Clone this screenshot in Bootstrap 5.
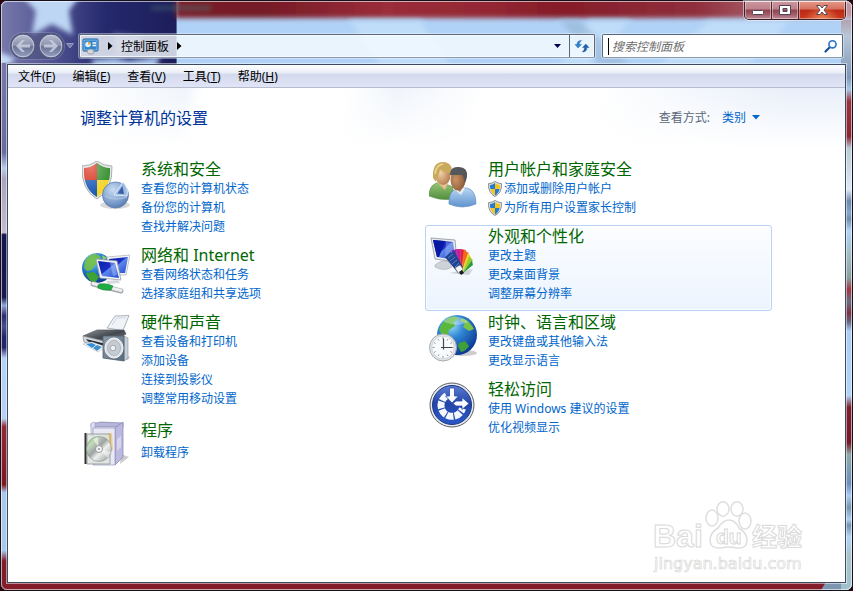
<!DOCTYPE html>
<html lang="zh-CN">
<head>
<meta charset="utf-8">
<meta name="viewport" content="width=device-width, initial-scale=1">
<title>控制面板</title>
<link href="https://cdn.jsdelivr.net/npm/bootstrap@5.3.0/dist/css/bootstrap.min.css" rel="stylesheet">
<style>
  body { font-family: "Noto Sans", "Noto Sans CJK SC", sans-serif; font-size: 12px; line-height: 19px; color: #000; background: #2a0509; }
  button, input, select { font: inherit; }
  .glass-window { isolation: isolate; padding: 0 6px 7px; border: 1px solid #15101c; border-radius: 7px; box-shadow: inset 0 0 0 1px rgba(255,255,255,.6); background: #b0d0f4; }
  .glass-backdrop { z-index: -1; border-radius: 6px; }
  .glass-rim { border: 1px solid rgba(255,255,255,.6); border-radius: 6px; }
  .caption-row { height: 33px; }
  .caption-group { height: 19px; border: 1px solid #39202a; border-top: 0; border-radius: 0 0 5px 5px; box-shadow: 0 0 0 1px rgba(255,255,255,.5); overflow: hidden; }
  .caption-btn { width: 27px; padding: 0; border: 0; border-right: 1px solid #4c2530; box-shadow: inset 0 0 0 1px rgba(255,255,255,.4); background: linear-gradient(#cd98a0 0, #bd8089 45%, #8e414e 50%, #a35d69 75%, #bf8e9a 100%); }
  .caption-close { width: 46px; border-right: 0; background: radial-gradient(ellipse at 50% 110%, #f08b58 0, rgba(230,90,50,0) 55%), linear-gradient(#e79a8a 0, #d5705e 45%, #bb2814 50%, #c93a20 100%); }
  .nav-row { padding: 0 3px; height: 24px; margin-bottom: 6px; }
  .travel { width: 69px; gap: 2px; }
  .travel-btn { width: 26px; height: 26px; }
  .travel-trough { gap: 2px; border-radius: 13px; background: rgba(70,76,115,.45); box-shadow: 0 0 0 1px rgba(160,168,200,.35); }
  .travel svg { display: block; }
  .address-bar { height: 24px; border: 1px solid #58677c; border-bottom-color: #8799ad; border-radius: 2px; background: rgba(248,252,255,.8); box-shadow: 0 0 0 1px rgba(255,255,255,.4), inset 0 0 0 1px rgba(255,255,255,.7); }
  .address-bar a { color: #000; }
  .crumbs { gap: 8px; padding-left: 2px; }
  .refresh-btn { width: 25px; border-left: 1px solid #58677c !important; }
  .search-box { width: 241px; height: 24px; border: 1px solid #58677c; border-bottom-color: #8799ad; border-radius: 2px; background: #fff; margin-left: 7px; padding: 0 4px 0 5px; box-shadow: 0 0 0 1px rgba(255,255,255,.4); }
  .search-box input { font-style: italic; outline: 0; padding: 0 0 0 3px; }
  .search-box input::placeholder { color: #6d6d6d; opacity: 1; }
  .text-caret { width: 1px; height: 17px; background: #000; }
  .client-area { border: 1px solid #3c4b62; background: #fff; box-shadow: 0 0 0 1px rgba(255,255,255,.5); }
  .menu-strip { height: 23px; gap: 1px; padding-left: 2px; border-bottom: 1px solid #b6bccc; background: linear-gradient(#fff 0, #e9edf6 8px, #d4daed 9px, #dfe5f6 100%); }
  .menu-strip button { padding: 1px 8px 0; line-height: 21px; color: #000; }
  .panel-body { background: linear-gradient(100deg, rgba(255,255,255,0) 9%, rgba(232,239,248,.7) 21%, rgba(255,255,255,0) 23%, rgba(255,255,255,0) 40%, rgba(228,236,247,.6) 46%, rgba(255,255,255,0) 56%, rgba(255,255,255,0) 70%, rgba(224,233,247,.8) 92%) top / 100% 66px no-repeat; }
  .panel-fade { background: linear-gradient(rgba(250,252,255,.1), #fff 60px); padding-bottom: 10px; }
  .panel-head { padding: 20px 85px 0 72px; height: 70px; }
  .panel-head h1 { font-size: 16px; line-height: 20px; color: #039; font-weight: 400; }
  .view-by { color: #5a6779; gap: 12px; }
  .view-by select { width: 38px; padding: 0; border: 0; color: #06c; appearance: none; background: transparent; }
  .view-by svg { margin-left: -20px; pointer-events: none; }
  .category-grid { padding: 0 73px 0 70px; }
  .category { padding: 0 3px 7px; border: 1px solid transparent; border-radius: 3px; }
  .category svg.cat-icon { width: 48px; height: 48px; flex: none; margin: 2px 11px 0 0; }
  .category h2 { font-size: 16px; line-height: 20px; font-weight: 400; margin: 0; }
  .category h2 a { color: #060; }
  .category ul a { color: #06c; }
  .category-short h2 { line-height: 26px; }
  .category.is-hot { border-color: #b9d3f5; background: linear-gradient(#fcfdff, #ecf4fe); box-shadow: inset 0 0 0 1px rgba(255,255,255,.7); }
  .category ul svg { width: 14px; height: 16px; flex: none; margin-right: 2px; }
  .watermark { right: 39px; bottom: 7px; pointer-events: none; }
</style>
<script src="https://cdn.jsdelivr.net/npm/bootstrap@5.3.0/dist/js/bootstrap.bundle.min.js"></script>
</head>
<body>
<div class="glass-window position-relative min-vh-100 d-flex flex-column">
  <svg class="glass-backdrop position-absolute top-0 start-0 w-100 h-100" viewBox="0 0 853 591" preserveAspectRatio="none" aria-hidden="true">
    <defs>
      <linearGradient id="navy"><stop offset="0" stop-color="#7779aa"/><stop offset=".3" stop-color="#4f5291"/><stop offset=".6" stop-color="#24296d"/><stop offset="1" stop-color="#1d1d5a"/></linearGradient>
      <linearGradient id="stripe"><stop offset="0" stop-color="#7b1e29"/><stop offset=".12" stop-color="#741a25"/><stop offset=".3" stop-color="#9a2d3a"/><stop offset=".45" stop-color="#932733"/><stop offset=".55" stop-color="#851c28"/><stop offset=".75" stop-color="#90303d"/><stop offset=".9" stop-color="#b97b88"/><stop offset="1" stop-color="#c9a0aa"/></linearGradient>
      <linearGradient id="leftEdge" x1="0" y1="0" x2="0" y2="1"><stop offset="0" stop-color="#7779aa"/><stop offset=".17" stop-color="#6b6c9d"/><stop offset=".2" stop-color="#b8cdea"/><stop offset=".22" stop-color="#a9a4bd"/><stop offset=".322" stop-color="#c5bccb"/><stop offset=".326" stop-color="#15164e"/><stop offset=".445" stop-color="#181850"/><stop offset=".46" stop-color="#8fa9d8"/><stop offset=".48" stop-color="#2c2c6d"/><stop offset=".5" stop-color="#4a4d8c"/><stop offset=".52" stop-color="#24246a"/><stop offset=".54" stop-color="#24246a"/><stop offset=".56" stop-color="#b5d3f5"/><stop offset=".675" stop-color="#b5d0f2"/><stop offset=".69" stop-color="#8f2b36"/><stop offset=".8" stop-color="#7c1822"/><stop offset=".815" stop-color="#a9c7eb"/><stop offset=".925" stop-color="#a9c7eb"/><stop offset=".945" stop-color="#7e1c28"/></linearGradient>
      <linearGradient id="rightEdge" gradientUnits="userSpaceOnUse" x1="0" y1="0" x2="0" y2="591"><stop offset="0" stop-color="#b0797f"/><stop offset=".06" stop-color="#b7c6d8"/><stop offset=".13" stop-color="#7f98b8"/><stop offset=".15" stop-color="#a7c8e8"/><stop offset=".17" stop-color="#98323f"/><stop offset=".23" stop-color="#8b2533"/><stop offset=".25" stop-color="#b8cbd3"/><stop offset=".32" stop-color="#dce8f7"/><stop offset=".34" stop-color="#6c89ac"/><stop offset=".36" stop-color="#85a6cc"/><stop offset=".37" stop-color="#6f8dac"/><stop offset=".39" stop-color="#b1d4f8"/><stop offset=".43" stop-color="#a2bdc4"/><stop offset=".47" stop-color="#8aa0a0"/><stop offset=".49" stop-color="#a03643"/><stop offset=".51" stop-color="#6b6a82"/><stop offset=".53" stop-color="#7b3145"/><stop offset=".545" stop-color="#646680"/><stop offset=".56" stop-color="#abcef5"/><stop offset=".67" stop-color="#b0d3f7"/><stop offset=".69" stop-color="#7b1f2b"/><stop offset=".75" stop-color="#701a26"/><stop offset=".77" stop-color="#8fa9a8"/><stop offset=".82" stop-color="#6c8fbc"/><stop offset=".84" stop-color="#a9cdf5"/><stop offset=".86" stop-color="#7795ac"/><stop offset=".88" stop-color="#acd0f7"/><stop offset=".89" stop-color="#7492ab"/><stop offset=".91" stop-color="#b3d6f8"/><stop offset=".94" stop-color="#a9c4cc"/><stop offset="1" stop-color="#9fc0cc"/></linearGradient>
      <filter id="soft" x="-20%" y="-20%" width="140%" height="140%"><feGaussianBlur stdDeviation="2.5"/></filter>
      <clipPath id="topClip"><rect width="853" height="72"/></clipPath>
    </defs>
    <rect width="853" height="591" fill="#b0d2f6"/>
    <g clip-path="url(#topClip)">
      <rect width="176" height="80" fill="url(#navy)"/>
      <g filter="url(#soft)">
        <rect x="175" y="-10" width="700" height="27" fill="url(#stripe)"/>
        <path d="M22-4l12-10h32l12 10-10 14 4 24-21-11-20 11 4-24Z" fill="#bdd6f4"/>
        <path d="M-5 50l20 8-10 8 3 14h-20Z" fill="#c4dcf6"/>
        <path d="M90 59l24-2 14 3 22-3 10-1-6 12 8 12H100Z" fill="#a9c5eb"/>
        <path d="M112 31l30 4-6 14-20 5Z" fill="#8488b5" opacity=".5"/>
        <path d="M150 7h60" stroke="#44656d" stroke-opacity=".6" stroke-width="4"/>
        <path d="M350 20l30 44h70l-30-44ZM590 20l-30 44h30l40-44ZM710 20l-50 44h90l40-44Z" fill="#c9e3fb" opacity=".6"/>
        <path d="M560 20l40 44h30l-50-44Z" fill="#8faecd" opacity=".5"/>
      </g>
    </g>
    <rect y="62" width="12" height="529" fill="url(#leftEdge)"/>
    <rect x="842" y="19" width="12" height="572" fill="url(#rightEdge)"/>
    <rect y="581" width="828" height="10" fill="#831d29"/>
    <path d="M828 581h14v10h-20Z" fill="#7c96b2"/>
  </svg>
  <div class="glass-rim position-absolute top-0 start-0 w-100 h-100 pe-none"></div>

  <div class="caption-row d-flex justify-content-end align-items-start flex-shrink-0">
    <div class="caption-group d-flex">
      <button class="caption-btn" aria-label="最小化"><svg width="14" height="16" viewBox="0 0 14 16" class="d-block mx-auto"><rect x="1.500" y="8.500" width="11" height="4" rx="1" fill="#fff" stroke="#4c4553"/></svg></button>
      <button class="caption-btn" aria-label="最大化"><svg width="14" height="16" viewBox="0 0 14 16" class="d-block mx-auto"><path fill="#fff" stroke="#4c4553" fill-rule="evenodd" d="M1.500 3.500h11v9h-11ZM5 6.500v3h4v-3Z"/></svg></button>
      <button class="caption-btn caption-close" aria-label="关闭"><svg width="14" height="16" viewBox="0 0 14 16" class="d-block mx-auto"><path d="M1.500 3.500H5L7 6l2-2.500h3.500L9 8l3.500 4.500H9L7 10l-2 2.500H1.500L5 8Z" fill="#fff" stroke="#5a4650"/></svg></button>
    </div>
  </div>

  <div class="nav-row d-flex align-items-center flex-shrink-0">
    <div class="travel d-flex align-items-center flex-shrink-0">
      <svg width="0" height="0" class="position-absolute" aria-hidden="true"><defs><linearGradient id="orb" x1="0" y1="0" x2="0" y2="1"><stop offset="0" stop-color="#b9bfd2"/><stop offset=".48" stop-color="#8b92ad"/><stop offset=".52" stop-color="#6b7295"/><stop offset="1" stop-color="#97a3c2"/></linearGradient></defs></svg>
      <div class="travel-trough d-flex">
        <button class="travel-btn btn p-0 border-0" aria-label="后退"><svg width="26" height="26" viewBox="0 0 26 26"><circle cx="13" cy="13" r="12" fill="url(#orb)" stroke="#535a7b" stroke-width="1.500"/><circle cx="13" cy="13" r="10.800" fill="none" stroke="#d2d8e6" stroke-opacity=".75"/><path d="M6 13l6-6h3l-4 4.500h9v3h-9l4 4.500h-3Z" fill="#c9d0e0" opacity=".85"/></svg></button>
        <button class="travel-btn btn p-0 border-0" aria-label="前进"><svg width="26" height="26" viewBox="0 0 26 26"><circle cx="13" cy="13" r="12" fill="url(#orb)" stroke="#535a7b" stroke-width="1.500"/><circle cx="13" cy="13" r="10.800" fill="none" stroke="#d2d8e6" stroke-opacity=".75"/><path d="M20 13l-6-6h-3l4 4.500H6v3h9L11 19h3Z" fill="#c9d0e0" opacity=".85"/></svg></button>
      </div>
      <button class="btn p-0 border-0" aria-label="最近的页面"><svg width="8" height="6" viewBox="0 0 8 6"><path d="M.5.500h7L4 5Z" fill="#767fa8" stroke="#a7b0cf" stroke-width=".7"/></svg></button>
    </div>
    <div class="address-bar d-flex flex-grow-1 align-items-stretch">
      <div class="crumbs d-flex align-items-center flex-grow-1">
        <svg width="18" height="18" viewBox="0 0 18 18" aria-hidden="true"><rect x="1" y="2" width="15" height="12" rx="1" fill="#3186cd" stroke="#175790"/><rect x="2" y="3" width="13" height="10" fill="none" stroke="#8bcbf4" stroke-width=".8"/><circle cx="6" cy="7.500" r="2.800" fill="#d6f1ff"/><path d="M6 7.500V4.700a2.800 2.800 0 0 1 2.800 2.800Z" fill="#f4a42c"/><path d="M10.500 6h3.500M10.500 8.500h3.500" stroke="#fff" stroke-width="1.300"/><path d="M5 15q0-3 3.500-3 3.500 0 3.500 3l-1 2H7Z" fill="#d5d6d9" stroke="#8d8d93" stroke-width=".7"/></svg>
        <svg width="5" height="8" viewBox="0 0 5 8" aria-hidden="true"><path d="M0 0l4.500 4L0 8Z" fill="#000"/></svg>
        <a href="#" class="text-decoration-none">控制面板</a>
        <svg width="5" height="8" viewBox="0 0 5 8" aria-hidden="true"><path d="M0 0l4.500 4L0 8Z" fill="#000"/></svg>
      </div>
      <button class="btn p-0 border-0 px-2 d-flex align-items-center" aria-label="以前的位置"><svg width="7" height="4" viewBox="0 0 7 4"><path d="M0 0h7L3.500 4Z" fill="#00004c"/></svg></button>
      <button class="refresh-btn btn p-0 border-0 rounded-0 d-flex align-items-center justify-content-center" aria-label="刷新"><svg width="16" height="16" viewBox="0 0 16 16"><path d="M1 6.500L4 10l3.500-3.500H5.300Q5.300 4 7.500 2.500 3 2.600 2.900 6.500Z" fill="#2d84cf" stroke="#1e62a8" stroke-width=".4"/><path d="M15 9.500L11.800 6 8.500 9.500h2Q10.600 12.500 8.300 14q4.600 0 4.600-4.500Z" fill="#1f62b1" stroke="#174c8e" stroke-width=".4"/></svg></button>
    </div>
    <div class="search-box d-flex align-items-center flex-shrink-0">
      <span class="text-caret" aria-hidden="true"></span>
      <input type="text" class="flex-grow-1 border-0 bg-transparent w-100" placeholder="搜索控制面板" aria-label="搜索控制面板">
      <button class="btn p-0 border-0 d-flex" aria-label="搜索"><svg width="14" height="14" viewBox="0 0 14 14"><path d="M1.500 12.500l4.200-4.300" stroke="#1b4c9c" stroke-width="2.200" stroke-linecap="round"/><circle cx="8.500" cy="5.300" r="3.600" fill="#f4faff" stroke="#2b72c2" stroke-width="1.600"/></svg></button>
    </div>
  </div>

  <div class="client-area position-relative flex-grow-1 d-flex flex-column">
    <nav class="menu-strip d-flex flex-shrink-0" aria-label="菜单栏">
      <button class="border-0 bg-transparent">文件(<u>F</u>)</button>
      <button class="border-0 bg-transparent">编辑(<u>E</u>)</button>
      <button class="border-0 bg-transparent">查看(<u>V</u>)</button>
      <button class="border-0 bg-transparent">工具(<u>T</u>)</button>
      <button class="border-0 bg-transparent">帮助(<u>H</u>)</button>
    </nav>

    <main class="panel-body flex-grow-1">
      <div class="panel-fade h-100">
        <header class="panel-head d-flex justify-content-between align-items-start">
          <h1 class="m-0">调整计算机的设置</h1>
          <div class="view-by d-flex align-items-center">
            <label for="view">查看方式:</label>
            <select id="view"><option>类别</option><option>大图标</option><option>小图标</option></select>
            <svg width="8" height="5" viewBox="0 0 8 5" aria-hidden="true"><path d="M0 0h8L4 4.500Z" fill="#06c"/></svg>
          </div>
        </header>

        <div class="category-grid row g-0">
          <div class="col-6">
            <section class="category d-flex">
              <svg class="cat-icon" viewBox="0 0 48 48" aria-hidden="true">
                <defs><clipPath id="shieldBig"><path d="M15 2q6 5 13 5 1 21-13 29Q1 28 2 7q7 0 13-5Z"/></clipPath><radialGradient id="pie" cx=".4" cy=".3" r=".8"><stop offset="0" stop-color="#c8dcf2"/><stop offset=".6" stop-color="#7fa1cd"/><stop offset="1" stop-color="#4c70a8"/></radialGradient><radialGradient id="shine" cx=".3" cy=".15" r=".7"><stop offset="0" stop-color="#fff" stop-opacity=".35"/><stop offset="1" stop-color="#fff" stop-opacity="0"/></radialGradient></defs>
                <ellipse cx="33" cy="44" rx="15" ry="4" fill="#000" opacity=".15"/>
                <path d="M15 0q7 5 15 5 1 24-15 33Q-1 29 0 5q8 0 15-5Z" fill="#e4e6e8" stroke="#999da2" stroke-width=".8"/>
                <g clip-path="url(#shieldBig)"><path d="M0 0h15v19H0Z" fill="#d8301c"/><path d="M15 0h15v19H15Z" fill="#379030"/><path d="M0 19h15v20H0Z" fill="#1f5cb5"/><path d="M15 19h15v20H15Z" fill="#f6d52b"/><path d="M0 0h30v38H0Z" fill="url(#shine)"/></g>
                <circle cx="33.500" cy="34" r="13" fill="url(#pie)" stroke="#5b7cad" stroke-width=".8"/>
                <path d="M23 35q10 5 22 1" stroke="#b8cee8" stroke-width="2" fill="none" opacity=".5"/>
                <path d="M41 21l-9 13 13 1q2-8-4-14Z" fill="#9dbde3" stroke="#f2f7ff" stroke-width=".8"/><path d="M40.500 25l-5 7.500 6.500.5Z" fill="#3c5fa3"/>
              </svg>
              <div><h2><a href="#" class="text-decoration-none">系统和安全</a></h2>
                <ul class="list-unstyled m-0"><li><a href="#" class="text-decoration-none">查看您的计算机状态</a></li><li><a href="#" class="text-decoration-none">备份您的计算机</a></li><li><a href="#" class="text-decoration-none">查找并解决问题</a></li></ul></div>
            </section>

            <section class="category d-flex">
              <svg class="cat-icon" viewBox="0 0 48 48" aria-hidden="true">
                <defs><radialGradient id="globe" cx=".35" cy=".25" r=".8"><stop offset="0" stop-color="#9fe0fa"/><stop offset=".4" stop-color="#2f86d4"/><stop offset="1" stop-color="#0a3590"/></radialGradient><linearGradient id="screen" x1="0" y1="0" x2="1" y2="1"><stop offset="0" stop-color="#0a1ea6"/><stop offset=".45" stop-color="#1a2fc4"/><stop offset=".5" stop-color="#5f86ea"/><stop offset="1" stop-color="#244bd0"/></linearGradient></defs>
                <circle cx="15" cy="21" r="15" fill="url(#globe)"/>
                <path d="M3 14Q7 7 14 7l5 3-3 3 2 3-5 2-3 5-5 1-3-3Z" fill="#72c043" opacity=".9"/><path d="M4 26l8-1 5 5-4 6Q6 34 4 26Z" fill="#3ea335"/><path d="M20 8l5 3-4 2Z" fill="#91d35a"/>
                <path d="M25 10l23-2-4 20-18 0Z" fill="#f1f3f6" stroke="#aab0b8" stroke-width=".7"/><path d="M27 12l19-2-3 16H28Z" fill="url(#screen)"/>
                <path d="M14 12l21 2 4 19-21-2Z" fill="#f1f3f6" stroke="#999fa8" stroke-width=".8"/><path d="M16 14l17 2 4 15-17-2Z" fill="url(#screen)"/><path d="M28 16l5 0 2 12-4 1Z" fill="#a6c1fa" opacity=".5"/>
                <path d="M24 34l12-1 2 3-12 1Z" fill="#d6dade"/>
                <path d="M11 37l15 4M27 41l12 3" stroke="#a5a9ac" stroke-width="5" stroke-linecap="round"/><path d="M11 36.500l15 4M27 40.500l12 3" stroke="#eceeef" stroke-width="3" stroke-linecap="round"/>
                <path d="M16 38q6-3 15 1l-2 4q-8 1-13-2Z" fill="#20ad45" stroke="#138030" stroke-width=".6"/>
              </svg>
              <div><h2><a href="#" class="text-decoration-none">网络和 Internet</a></h2>
                <ul class="list-unstyled m-0"><li><a href="#" class="text-decoration-none">查看网络状态和任务</a></li><li><a href="#" class="text-decoration-none">选择家庭组和共享选项</a></li></ul></div>
            </section>

            <section class="category d-flex">
              <svg class="cat-icon" viewBox="0 0 48 48" aria-hidden="true">
                <defs><linearGradient id="prn" x1="0" y1="0" x2="1" y2="1"><stop offset="0" stop-color="#8e949b"/><stop offset=".5" stop-color="#44484d"/><stop offset="1" stop-color="#80868d"/></linearGradient><linearGradient id="spk" x1="0" y1="0" x2="1" y2="1"><stop offset="0" stop-color="#8b9aa9"/><stop offset="1" stop-color="#5b6b7c"/></linearGradient></defs>
                <path d="M25 14L33 2l14-.5-6 15Z" fill="#f0f4f8" stroke="#9aa1a9" stroke-width=".8"/><path d="M30 11l5-7 9-.3" stroke="#cbd7e3" fill="none"/>
                <path d="M1 22l14-6h27l2 4-14 9Z" fill="url(#prn)" stroke="#555a61" stroke-width=".7"/><path d="M1 22l29 7v7L2 28Z" fill="#d5dadf" stroke="#7f868d" stroke-width=".7"/>
                <path d="M4 25l18 4.500-1 2-15-4Z" fill="#26292d"/><path d="M1 30l9-2 14 5-8 5Z" fill="#fafcfd" stroke="#a6adb3" stroke-width=".5"/><path d="M4 30l6-1 4 2-4 3Z" fill="#2f8fd8"/><path d="M11 34l4-3 5 2-5 4Z" fill="#3f8fc6"/>
                <path d="M38 46h8l2-3-4-2Z" fill="#000" opacity=".2"/><path d="M42 22l4 2v20l-4 3Z" fill="#c8d0d7" stroke="#87919b" stroke-width=".6"/>
                <path d="M21 22h21v25l-21-3Z" fill="url(#spk)" stroke="#506071" stroke-width=".8"/><ellipse cx="32" cy="34" rx="9" ry="10" fill="#dce1e6" stroke="#f7f8f9"/><ellipse cx="32" cy="34" rx="6.500" ry="7.500" fill="#c6ccd3" stroke="#a0a9b2" stroke-width=".7"/><circle cx="31" cy="34" r="2.800" fill="#eef0f3" stroke="#848f99" stroke-width=".7"/>
              </svg>
              <div><h2><a href="#" class="text-decoration-none">硬件和声音</a></h2>
                <ul class="list-unstyled m-0"><li><a href="#" class="text-decoration-none">查看设备和打印机</a></li><li><a href="#" class="text-decoration-none">添加设备</a></li><li><a href="#" class="text-decoration-none">连接到投影仪</a></li><li><a href="#" class="text-decoration-none">调整常用移动设置</a></li></ul></div>
            </section>

            <section class="category category-short d-flex">
              <svg class="cat-icon" viewBox="0 0 48 48" aria-hidden="true">
                <defs><linearGradient id="disc" x1="0" y1="0" x2="1" y2="1"><stop offset="0" stop-color="#6fdc3a"/><stop offset=".25" stop-color="#c6d6be"/><stop offset=".45" stop-color="#9ca3a1"/><stop offset=".6" stop-color="#eff0ee"/><stop offset="1" stop-color="#85908f"/></linearGradient></defs>
                <path d="M38 45l9-7-8-3Z" fill="#000" opacity=".2"/>
                <path d="M9 5l10-2 22 1v4H9Z" fill="#b5b5da" stroke="#8585b0" stroke-width=".7"/>
                <path d="M9 4l4-1v14H9Z" fill="#dedef0" stroke="#9e9ec6" stroke-width=".6"/><path d="M33 9l8-6v35l-8 8Z" fill="#bbb9df" stroke="#7f7eae" stroke-width=".7"/><path d="M35 20l4-3v11l-4 4Z" fill="#e8e7f5" opacity=".6"/>
                <path d="M11 9h22v37H11Z" fill="#e9e9f6" stroke="#9695bd" stroke-width=".7"/><path d="M22 15l8-1 1 17-8 2Z" fill="#f2ce83"/>
                <path d="M5 15h23v30H5Z" fill="#dde2df" fill-opacity=".8" stroke="#7f8685" stroke-width=".7"/><path d="M3.500 14v31" stroke="#303030" stroke-width="2"/>
                <circle cx="17" cy="30" r="12.500" fill="url(#disc)" stroke="#858d89" stroke-width=".6"/><path d="M17 30L11 20l5-2ZM17 30l12 3-3 6Z" fill="#fff" opacity=".5"/><circle cx="17" cy="30" r="3.500" fill="#f8f8f8" stroke="#929a98"/><circle cx="17" cy="30" r="1.300" fill="#a7afac"/>
              </svg>
              <div><h2><a href="#" class="text-decoration-none">程序</a></h2>
                <ul class="list-unstyled m-0"><li><a href="#" class="text-decoration-none">卸载程序</a></li></ul></div>
            </section>
          </div>

          <div class="col-6">
            <section class="category d-flex">
              <svg class="cat-icon" viewBox="0 0 48 48" aria-hidden="true">
                <defs><radialGradient id="skinA" cx=".35" cy=".4" r=".7"><stop offset="0" stop-color="#f0cfa6"/><stop offset="1" stop-color="#b07a4b"/></radialGradient><radialGradient id="skinB" cx=".35" cy=".5" r=".7"><stop offset="0" stop-color="#c99365"/><stop offset="1" stop-color="#855433"/></radialGradient><linearGradient id="coatA" x1="0" y1="0" x2="0" y2="1"><stop offset="0" stop-color="#9cc878"/><stop offset="1" stop-color="#4f8e3e"/></linearGradient><linearGradient id="coatB" x1="0" y1="0" x2="0" y2="1"><stop offset="0" stop-color="#b7d6f4"/><stop offset="1" stop-color="#5f93ce"/></linearGradient></defs>
                <path d="M0 35q0-13 12-14l12 5v12q-12 2-24-3Z" fill="url(#coatA)" stroke="#5b8d4c" stroke-width=".6"/>
                <path d="M8 21l8 8 4-9Z" fill="#e8c092"/><ellipse cx="14" cy="14" rx="7.500" ry="10" fill="url(#skinA)"/>
                <path d="M4 17Q3 1 14 1q8 0 9 8l-2 3Q15 12 11 8q-1 4-4 13Z" fill="#c9aa5c"/><path d="M6 13Q7 4 14 3" stroke="#ead895" fill="none" stroke-width="1.500"/>
                <path d="M20 43q-1-14 10-16h8q9 2 9 16-14 6-27 0Z" fill="url(#coatB)" stroke="#5d87b7" stroke-width=".6"/><path d="M24 27l8 7 4-7Z" fill="#e6eff8"/><path d="M25 26l6 5 4-7Z" fill="#b47e50"/>
                <ellipse cx="29" cy="18.500" rx="7.500" ry="11" fill="url(#skinB)"/><path d="M21 14Q21 5 30 6q9 0 8 10-1 4-2 6-1-6-3-8-6 0-12 0Z" fill="#55585b"/>
              </svg>
              <div><h2><a href="#" class="text-decoration-none">用户帐户和家庭安全</a></h2>
                <ul class="list-unstyled m-0">
                  <li class="d-flex align-items-center"><svg viewBox="0 0 14 16" aria-hidden="true"><defs><clipPath id="shieldSmall"><path d="M7 2q2.500 2 5 2 .5 7-5 10.500Q1.500 11 2 4q2.500 0 5-2Z"/></clipPath></defs><path id="uac" d="M7 .5q3 2 6.500 2.200Q14 12 7 15.500 0 12 .5 2.700 4 2.500 7 .5Z" fill="#dfe3e6" stroke="#7d858c" stroke-width=".9"/><g clip-path="url(#shieldSmall)"><path d="M0 0h7v8H0ZM7 8h7v8H7Z" fill="#247bd2"/><path d="M7 0h7v8H7ZM0 8h7v8H0Z" fill="#f6c51d"/></g></svg><a href="#" class="text-decoration-none">添加或删除用户帐户</a></li>
                  <li class="d-flex align-items-center"><svg viewBox="0 0 14 16" aria-hidden="true"><use href="#uac"/><g clip-path="url(#shieldSmall)"><path d="M0 0h7v8H0ZM7 8h7v8H7Z" fill="#247bd2"/><path d="M7 0h7v8H7ZM0 8h7v8H0Z" fill="#f6c51d"/></g></svg><a href="#" class="text-decoration-none">为所有用户设置家长控制</a></li>
                </ul></div>
            </section>

            <section class="category is-hot d-flex">
              <svg class="cat-icon" viewBox="0 0 48 48" aria-hidden="true">
                <path d="M6 37q7-6 14-3l3 5q-8 5-17 0Z" fill="#cfd3d7" stroke="#a7adb2" stroke-width=".6"/>
                <path d="M2 10l24 2 2 22-22-3Z" fill="#e8eaed" stroke="#8d949c" stroke-width=".8"/><path d="M4 12l20 2 2 18-18-3Z" fill="url(#screen)"/><path d="M4 12l12 1-6 16H8Z" fill="#0818a3"/><path d="M17 14l7 1 1 9-9 6Z" fill="#9ab4f3" opacity=".45"/>
                <path d="M20 45l20 2 4-6Z" fill="#000" opacity=".15"/>
                <g stroke="#fff" stroke-opacity=".35" stroke-width=".4"><path d="M31 46L16 29l6-6Z" fill="#2450b8"/><path d="M31 46l-9-24 7-1Z" fill="#8126a8"/><path d="M31 46l-4-25 6 0Z" fill="#c41f98"/><path d="M31 46l1-25 5 1Z" fill="#e51d2c"/><path d="M32 46l3-24 5 3Z" fill="#f1681d"/><path d="M32 46l7-21 3 4Z" fill="#f6d01c"/><path d="M33 46l7-18 4 4Z" fill="#9bcd27"/><path d="M33 46l10-14 1 5Z" fill="#259b39"/></g>
                <path d="M16 29l9-6 9 16-5 6Z" fill="#24438f"/><path d="M19 30l5-4M21 33l5-4M23 36l5-4M26 39l4-4" stroke="#4f7fd0"/><path d="M26 40l5-3 3 4-4 5Z" fill="#f5f6f8" stroke="#777" stroke-width=".6"/><path d="M30 44l3-2 2 3-3 2Z" fill="#181a1e"/>
              </svg>
              <div><h2><a href="#" class="text-decoration-none">外观和个性化</a></h2>
                <ul class="list-unstyled m-0"><li><a href="#" class="text-decoration-none">更改主题</a></li><li><a href="#" class="text-decoration-none">更改桌面背景</a></li><li><a href="#" class="text-decoration-none">调整屏幕分辨率</a></li></ul></div>
            </section>

            <section class="category d-flex">
              <svg class="cat-icon" viewBox="0 0 48 48" aria-hidden="true">
                <ellipse cx="34" cy="39" rx="14" ry="3" fill="#000" opacity=".2"/><circle cx="28" cy="21" r="20" fill="url(#globe)"/>
                <path d="M10 15Q15 4 25 2l5 3-5 3 1 4-6 4-1 5-6 1Z" fill="#5bb83f"/><path d="M33 4q8 3 12 11l-5 2-6-4 2-4-5-2Z" fill="#79c246"/><path d="M30 29l6-2 4 5q-3 5-8 6l-3-6Z" fill="#3f9f38"/><path d="M14 7q12-9 26 1-13 6-26-1Z" fill="#fff" opacity=".3"/>
                <circle cx="14" cy="33.500" r="13.500" fill="#e1e5e9" stroke="#a5abb1"/><circle cx="14" cy="33.500" r="11.300" fill="#f9fafb" stroke="#c9ced3" stroke-width=".8"/>
                <path d="M14 23v2M14 42v2M3.500 33.500h2M22.500 33.500h2M19 25l-1 1.500M23 28.500l-1.500 1M23 38.500l-1.500-1M19 42l-1-1.500M9 42l1-1.500M5 38.500l1.500-1M5 28.500l1.500 1M9 25l1 1.500" stroke="#8b9299"/><path d="M14.500 24.500v11M12 33.500h11" stroke="#40474d" stroke-width="1.200"/>
              </svg>
              <div><h2><a href="#" class="text-decoration-none">时钟、语言和区域</a></h2>
                <ul class="list-unstyled m-0"><li><a href="#" class="text-decoration-none">更改键盘或其他输入法</a></li><li><a href="#" class="text-decoration-none">更改显示语言</a></li></ul></div>
            </section>

            <section class="category d-flex">
              <svg class="cat-icon" viewBox="0 0 48 48" aria-hidden="true">
                <defs><linearGradient id="ease" x1="0" y1="0" x2="0" y2="1"><stop offset="0" stop-color="#5d7fd2"/><stop offset=".45" stop-color="#2445a8"/><stop offset="1" stop-color="#2a58c8"/></linearGradient></defs>
                <circle cx="23" cy="24" r="22" fill="#e7eaee" stroke="#596066"/><circle cx="23" cy="24" r="19.500" fill="url(#ease)" stroke="#1b3684"/>
                <path d="M17.500 14.800A11 11 0 1 0 33.500 27.500" fill="none" stroke="#f4f7fc" stroke-width="7" stroke-dasharray="6.600 1.200"/>
                <path d="M20.500 7h5v8h4l-6.500 7-6.500-7h4Z" fill="#f9fbfd" stroke="#2a4cae" stroke-width=".8"/><path d="M27 20h6v-3.500l7 6-7 6V25h-6l-3-2.500Z" fill="#f9fbfd" stroke="#2a4cae" stroke-width=".8"/>
              </svg>
              <div><h2><a href="#" class="text-decoration-none">轻松访问</a></h2>
                <ul class="list-unstyled m-0"><li><a href="#" class="text-decoration-none">使用 Windows 建议的设置</a></li><li><a href="#" class="text-decoration-none">优化视频显示</a></li></ul></div>
            </section>
          </div>
        </div>
      </div>
    </main>

    <svg class="watermark position-absolute" width="154" height="74" viewBox="0 0 154 74" role="img" aria-label="Baidu 经验 jingyan.baidu.com">
      <g fill="#fff" stroke="#dedede" stroke-width="1.500">
        <ellipse cx="60" cy="17" rx="6" ry="8"/><ellipse cx="71" cy="8" rx="6" ry="7.200"/><ellipse cx="85" cy="8" rx="6" ry="7.200"/><ellipse cx="93" cy="20" rx="6" ry="8"/>
        <path d="M77 19q6 0 10 8 8 5 8 12 0 9-10 8-8-2-16 0-11 1-11-8 0-7 8-12 5-8 11-8Z"/>
      </g>
      <g fill="#fff" stroke="#d9d9d9" font-family="'Liberation Sans', 'Noto Sans CJK SC', sans-serif" font-weight="700">
        <text x="1" y="46" font-size="32" stroke-width="1">Bai</text>
        <text x="64" y="43" font-size="21" stroke-width="1">du</text>
        <text x="100" y="45" font-size="25" stroke-width="1">经验</text>
        <text x="2" y="68" font-size="16" stroke-width=".7" font-family="'DejaVu Sans', sans-serif" font-weight="400">jingyan.baidu.com</text>
      </g>
    </svg>
  </div>
</div>
</body>
</html>
